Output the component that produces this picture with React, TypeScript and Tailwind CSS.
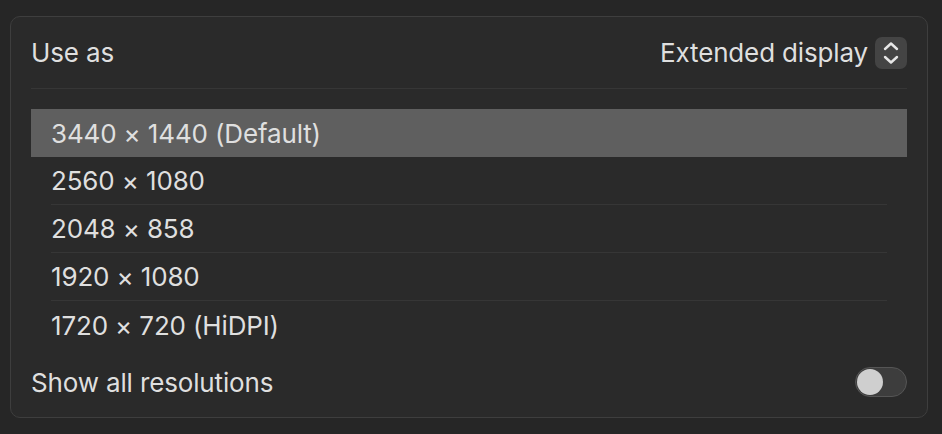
import React from 'react';

const resolutions = [
  '3440 × 1440 (Default)',
  '2560 × 1080',
  '2048 × 858',
  '1920 × 1080',
  '1720 × 720 (HiDPI)',
];

export default function App() {
  return (
    <div
      className="w-[942px] h-[434px] bg-[#262626] pt-4 pl-[10px] text-[#dfdfdf]"
      style={{ fontFamily: 'Inter, "Noto Sans", sans-serif' }}
    >
      <div className="w-[918px] h-[402px] rounded-[10px] border border-[#3e3e3e] bg-[#2a2a2a] px-5">
        {/* Use as */}
        <div className="h-[72px] flex items-center justify-between border-b border-[#363636]">
          <span className="text-[26px] tracking-[-0.15px]">Use as</span>
          <div className="flex items-center gap-[7px]">
            <span className="text-[26px] tracking-[-0.15px]">Extended display</span>
            <div className="w-8 h-8 rounded-[7px] bg-[#444444]">
              <svg width="32" height="32" viewBox="0 0 32 32" fill="none" stroke="#e6e6e6" strokeWidth="2.4" strokeLinecap="round" strokeLinejoin="round">
                <path d="M10 12 L16 6.5 L22 12" />
                <path d="M10 20 L16 25.5 L22 20" />
              </svg>
            </div>
          </div>
        </div>

        {/* Resolutions list */}
        <div className="mt-5">
          {resolutions.map((r, i) => (
            <div key={r} className={i === 0 ? 'bg-[#5f5f5f]' : ''}>
              <div
                className={
                  'h-12 mx-5 flex items-center text-[26px] tracking-[-0.15px] ' +
                  (i > 0 && i < resolutions.length - 1 ? 'border-b border-[#363636]' : '')
                }
              >
                {r}
              </div>
            </div>
          ))}
        </div>

        {/* Show all resolutions */}
        <div className="h-[68px] flex items-center justify-between pb-[2px]">
          <span className="text-[26px] tracking-[-0.15px]">Show all resolutions</span>
          <div className="w-[52px] h-[30px] rounded-full bg-[#3d3d3d] border border-[#555555] flex items-center px-[1px]">
            <div className="w-[26px] h-[26px] rounded-full bg-[#cfcfcf]" />
          </div>
        </div>
      </div>
    </div>
  );
}
